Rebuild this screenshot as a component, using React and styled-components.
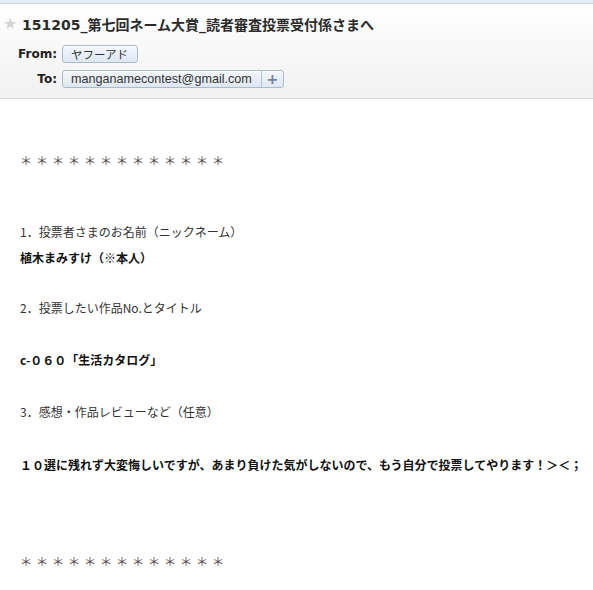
import React from "react";
import styled, { createGlobalStyle } from "styled-components";

const GlobalStyle = createGlobalStyle`
  html, body {
    margin: 0;
    padding: 0;
    background: #ffffff;
  }
  body {
    font-family: "DejaVu Sans", "Noto Sans CJK JP", sans-serif;
    color: #333;
  }
`;

const asterisks = "＊＊＊＊＊＊＊＊＊＊＊＊＊";

const lines = [
  { text: asterisks, stars: true, gap: 49 },
  { text: "1．投票者さまのお名前（ニックネーム）", gap: 45 },
  { text: "植木まみすけ（※本人）", bold: true, gap: 0 },
  { text: "2．投票したい作品No.とタイトル", gap: 24 },
  { text: "c-０６０「生活カタログ」", bold: true, gap: 26 },
  { text: "3．感想・作品レビューなど（任意）", gap: 26 },
  {
    text: "１０選に残れず大変悔しいですが、あまり負けた気がしないので、もう自分で投票してやります！＞＜；",
    bold: true,
    gap: 27,
  },
  { text: asterisks, stars: true, gap: 71 },
];

const App = () => {
  return (
    <>
      <GlobalStyle />
      <StyledMail>
        <StyledTopStrip />
        <StyledHeader>
          <StyledTitleRow>
            <StyledStar>★</StyledStar>
            <StyledTitle>151205_第七回ネーム大賞_読者審査投票受付係さまへ</StyledTitle>
          </StyledTitleRow>
          <StyledFields>
            <StyledLabel>From:</StyledLabel>
            <StyledChip>
              <StyledChipText $cjk>ヤフーアド</StyledChipText>
            </StyledChip>
            <StyledLabel>To:</StyledLabel>
            <StyledChip>
              <StyledChipText>manganamecontest@gmail.com</StyledChipText>
              <StyledChipAdd>+</StyledChipAdd>
            </StyledChip>
          </StyledFields>
        </StyledHeader>
        <StyledBody>
          {lines.map((line, i) => (
            <StyledLine key={i} $gap={line.gap} $bold={line.bold} $stars={line.stars}>
              {line.text}
            </StyledLine>
          ))}
        </StyledBody>
      </StyledMail>
    </>
  );
};

const StyledMail = styled.div`
  width: 593px;
  height: 590px;
  overflow: hidden;
  background: #fff;
`;

const StyledTopStrip = styled.div`
  height: 3px;
  background: #e5edf8;
  border-bottom: 1px solid #c9d5e5;
`;

const StyledHeader = styled.div`
  height: 84px;
  padding-top: 10px;
  background: linear-gradient(to bottom, #ffffff 0%, #f9f9f9 40%, #f1f1f1 100%);
  border-bottom: 1px solid #d9d9d9;
`;

const StyledTitleRow = styled.div`
  display: flex;
  align-items: center;
  height: 20px;
`;

const StyledStar = styled.span`
  width: 22px;
  padding-left: 3px;
  box-sizing: border-box;
  font-size: 16px;
  line-height: 20px;
  color: #d6d6d6;
  font-family: "DejaVu Sans", sans-serif;
`;

const StyledTitle = styled.h1`
  margin: 0;
  font-size: 14px;
  font-weight: bold;
  color: #2b2b2b;
  white-space: nowrap;
`;

const StyledFields = styled.div`
  display: grid;
  grid-template-columns: 57px max-content;
  column-gap: 5px;
  row-gap: 7px;
  align-items: center;
  margin-top: 11px;
`;

const StyledLabel = styled.span`
  text-align: right;
  font-size: 12px;
  font-weight: bold;
  color: #222;
`;

const StyledChip = styled.div`
  justify-self: start;
  display: flex;
  align-items: stretch;
  height: 16px;
  border: 1px solid #a9b9ce;
  border-radius: 3px;
  background: linear-gradient(to bottom, #f3f7fc 0%, #dfe7f2 100%);
  box-shadow: inset 0 1px 0 #fafcff;
`;

const StyledChipText = styled.span`
  display: flex;
  align-items: center;
  padding: 0 9px 0 8px;
  font-family: ${(p) =>
    p.$cjk ? `"Noto Sans CJK JP", sans-serif` : `"Liberation Sans", "Noto Sans CJK JP", sans-serif`};
  font-size: ${(p) => (p.$cjk ? "11.5px" : "12.6px")};
  font-weight: 400;
  color: #333;
  white-space: nowrap;
`;

const StyledChipAdd = styled.span`
  display: flex;
  align-items: center;
  justify-content: center;
  width: 21px;
  border-left: 1px solid #b3c1d3;
  font-family: "DejaVu Sans", sans-serif;
  font-size: 14px;
  font-weight: bold;
  color: #6f819b;
`;

const StyledBody = styled.div`
  padding-left: 20px;
  font-family: "Noto Sans CJK JP", sans-serif;
  font-size: 12px;
`;

const StyledLine = styled.div`
  margin-top: ${(p) => p.$gap}px;
  line-height: 26px;
  height: 26px;
  white-space: nowrap;
  font-weight: ${(p) => (p.$bold ? 700 : 400)};
  color: ${(p) => (p.$stars ? "#4a4a4a" : p.$bold ? "#111" : "#333")};
  letter-spacing: ${(p) => (p.$stars ? "4px" : "0")};
`;

export default App;
